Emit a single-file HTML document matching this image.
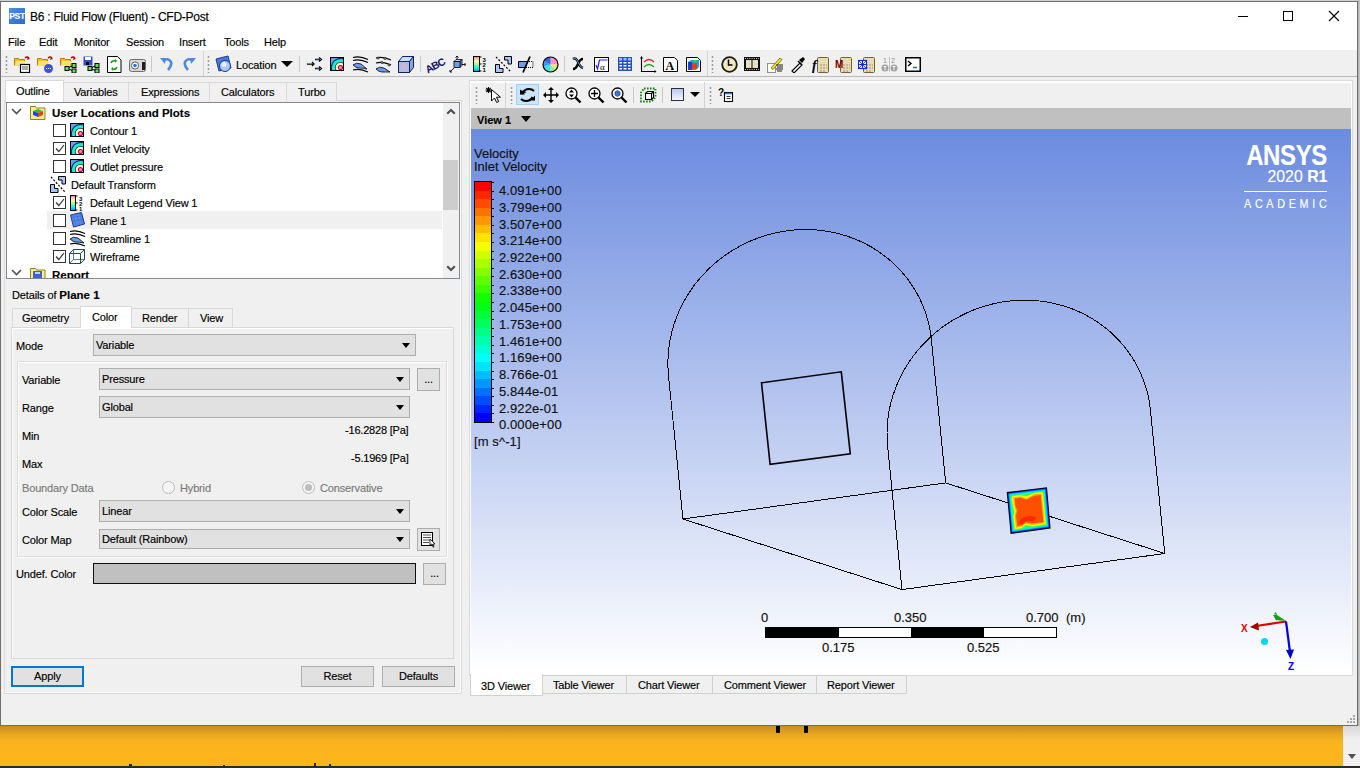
<!DOCTYPE html>
<html><head><meta charset="utf-8">
<style>
*{box-sizing:border-box;margin:0;padding:0}
html,body{width:1360px;height:768px;overflow:hidden;background:#f0f0f0}
body{position:relative;font-family:"Liberation Sans",sans-serif;font-size:11px;color:#000;letter-spacing:-0.15px;-webkit-text-stroke:0.15px currentColor}
.a{position:absolute}
.t{position:absolute;white-space:nowrap;line-height:13px}
.sep{position:absolute;width:1px;background:#c8c8c8}
.grip{position:absolute;width:3px;background-image:radial-gradient(circle at 1.5px 2px,#9c9c9c 0.8px,#d8d8d8 1.1px,transparent 1.4px);background-size:3px 4px}
.combo{position:absolute;background:#e1e1e1;border:1px solid #adadad}
.combo span{position:absolute;left:2px;top:4px;white-space:nowrap;line-height:13px}
.combo i{position:absolute;right:5px;top:8px;width:0;height:0;border-left:4px solid transparent;border-right:4px solid transparent;border-top:5px solid #000}
.btn{position:absolute;background:#e1e1e1;border:1px solid #adadad;text-align:center;line-height:19px}
.cb{position:absolute;width:13px;height:13px;border:1px solid #333;background:#fff}
.tab{position:absolute;background:#f0f0f0;border:1px solid #d9d9d9;border-bottom:none}
.tab span{position:absolute;white-space:nowrap;line-height:13px}
</style></head><body>

<!-- orange background page below window -->
<div class="a" style="left:0;top:726px;width:1343px;height:40px;background:linear-gradient(#c88c1e 0px,#e6a61f 8px,#fbb41d 16px,#fdb61d 40px)"></div>
<div class="a" style="left:1343px;top:726px;width:17px;height:40px;background:linear-gradient(#d8d8d8,#f0f0f0 14px)"></div>
<div class="a" style="left:1348px;top:754px;width:0;height:0;border-left:4px solid transparent;border-right:4px solid transparent;border-top:5px solid #505050"></div>
<div class="a" style="left:0;top:766px;width:1360px;height:2px;background:#2b2b2b"></div>
<div class="a" style="left:776px;top:726px;width:4px;height:7px;background:#000;border-radius:0 0 1px 1px"></div>
<div class="a" style="left:804px;top:726px;width:4px;height:7px;background:#000;border-radius:0 0 1px 1px"></div>
<div class="a" style="left:129px;top:764px;width:3px;height:2px;background:#222"></div>
<div class="a" style="left:223px;top:765px;width:2px;height:1px;background:#222"></div>
<div class="a" style="left:314px;top:763px;width:2px;height:3px;background:#222"></div>
<div class="a" style="left:329px;top:764px;width:2px;height:2px;background:#222"></div>

<!-- window -->
<div class="a" style="left:0;top:0;width:1360px;height:1px;background:#cdd1d5"></div><div class="a" style="left:1358px;top:0;width:2px;height:726px;background:linear-gradient(90deg,#a8a8a8,#cfcfcf)"></div>
<div id="win" class="a" style="left:0;top:1px;width:1358px;height:725px;background:#f0f0f0;border:1px solid #6e6e6e">
</div>

<!-- title bar -->
<div class="a" style="left:1px;top:2px;width:1356px;height:49px;background:#fff"></div>
<div class="a" style="left:9px;top:8px;width:16px;height:16px;background:linear-gradient(135deg,#4a8ee8,#2a6ad8)"></div>
<div class="t" style="left:9px;top:8px;width:16px;text-align:center;line-height:16px;font-size:8.5px;font-weight:700;color:#fff;letter-spacing:-0.3px">PST</div>
<div class="t" style="left:30px;top:11px;font-size:12px;letter-spacing:-0.25px">B6 : Fluid Flow (Fluent) - CFD-Post</div>
<!-- window controls -->
<div class="a" style="left:1238px;top:16px;width:10px;height:1px;background:#000"></div>
<div class="a" style="left:1283px;top:11px;width:10px;height:10px;border:1px solid #000"></div>
<svg class="a" style="left:1328px;top:10px" width="12" height="12"><path d="M1 1L11 11M11 1L1 11" stroke="#000" stroke-width="1.1"/></svg>

<!-- menu -->
<div class="t" style="left:8px;top:36px">File</div>
<div class="t" style="left:39px;top:36px">Edit</div>
<div class="t" style="left:74px;top:36px">Monitor</div>
<div class="t" style="left:126px;top:36px">Session</div>
<div class="t" style="left:179px;top:36px">Insert</div>
<div class="t" style="left:224px;top:36px">Tools</div>
<div class="t" style="left:264px;top:36px">Help</div>
<div class="a" style="left:1px;top:50px;width:1356px;height:1px;background:#f0f0f0"></div>

<!-- main toolbar -->
<div class="a" style="left:1px;top:51px;width:1356px;height:26px;background:#f0f0f0;border-bottom:1px solid #b8b8b8"></div>
<!-- toolbar grips / separators -->
<div class="grip" style="left:5px;top:55px;height:18px"></div>
<div class="sep" style="left:151px;top:56px;height:16px"></div>
<div class="a" style="left:203px;top:51px;width:1px;height:25px;background:#d4d4d4"></div>
<div class="grip" style="left:207px;top:55px;height:18px"></div>
<div class="sep" style="left:299px;top:56px;height:16px"></div>
<div class="sep" style="left:420px;top:56px;height:16px"></div>
<div class="sep" style="left:564px;top:56px;height:16px"></div>
<div class="a" style="left:707px;top:51px;width:1px;height:25px;background:#d4d4d4"></div>
<div class="grip" style="left:711px;top:55px;height:18px"></div>

<!-- icons row 1 -->
<svg class="a" style="left:14px;top:56px" width="17" height="17" viewBox="0 0 17 17">
 <path d="M0.5 2.5h4l1 1h5v6h-10z" fill="#f0c030" stroke="#b08000" stroke-width="1"/>
 <path d="M2 5h10l-2 5H0.5z" fill="#ffe070"/>
 <path d="M11 2q2-2 4 0" stroke="#c00000" fill="none" stroke-width="1.3"/><path d="M14 1l2 2-3 1z" fill="#c00000"/>
 <rect x="6.5" y="8.5" width="9" height="8" fill="#fff" stroke="#000" stroke-width="1.2"/>
 <path d="M8 11h6M8 13h6" stroke="#555" stroke-width="1"/>
</svg>
<svg class="a" style="left:37px;top:56px" width="17" height="17" viewBox="0 0 17 17">
 <path d="M0.5 2.5h4l1 1h5v6h-10z" fill="#f0c030" stroke="#b08000" stroke-width="1"/>
 <path d="M2 5h10l-2 5H0.5z" fill="#ffe070"/>
 <path d="M11 2q2-2 4 0" stroke="#c00000" fill="none" stroke-width="1.3"/><path d="M14 1l2 2-3 1z" fill="#c00000"/>
 <circle cx="11.5" cy="12.5" r="4.5" fill="#3b4ef0"/>
 <path d="M9 12.5h1M11 12.5h1M13 12.5h1" stroke="#fff" stroke-width="1.2"/>
</svg>
<svg class="a" style="left:60px;top:56px" width="17" height="17" viewBox="0 0 17 17">
 <path d="M0.5 2.5h4l1 1h5v6h-10z" fill="#f0c030" stroke="#b08000" stroke-width="1"/>
 <path d="M2 5h10l-2 5H0.5z" fill="#ffe070"/>
 <path d="M11 2q2-2 4 0" stroke="#c00000" fill="none" stroke-width="1.3"/><path d="M14 1l2 2-3 1z" fill="#c00000"/>
 <path d="M7 12.5L14 9M7 12.5L14 15" stroke="#000" stroke-width="1"/>
 <rect x="5" y="10.5" width="4" height="4" fill="#60e060" stroke="#000"/><rect x="12" y="7.5" width="4" height="4" fill="#60e060" stroke="#000"/><rect x="12" y="13" width="4" height="4" fill="#60e060" stroke="#000"/>
</svg>
<svg class="a" style="left:83px;top:56px" width="17" height="17" viewBox="0 0 17 17">
 <rect x="0.5" y="0.5" width="9" height="9" fill="#3050c0"/><rect x="2" y="1" width="6" height="3" fill="#fff"/><rect x="3" y="6" width="3" height="3" fill="#000"/>
 <path d="M7 12.5L14 9M7 12.5L14 15" stroke="#000" stroke-width="1"/>
 <rect x="5" y="10.5" width="4" height="4" fill="#60e060" stroke="#000"/><rect x="12" y="7.5" width="4" height="4" fill="#60e060" stroke="#000"/><rect x="12" y="13" width="4" height="4" fill="#60e060" stroke="#000"/>
</svg>
<svg class="a" style="left:107px;top:56px" width="15" height="17" viewBox="0 0 15 17">
 <path d="M0.5 0.5h10l3.5 3.5v12.5h-13.5z" fill="#fff" stroke="#000"/>
 <path d="M4 7q1-3 5-2" stroke="#1a9a1a" stroke-width="1.6" fill="none"/><path d="M10 11q-1 3-5 2" stroke="#1a9a1a" stroke-width="1.6" fill="none"/>
 <path d="M8 3l2 2-2 2z" fill="#1a9a1a"/><path d="M6 11l-2 2 2 2z" fill="#1a9a1a"/>
</svg>
<svg class="a" style="left:129px;top:58px" width="17" height="14" viewBox="0 0 17 14">
 <rect x="0.5" y="1.5" width="16" height="12" rx="2" fill="#d8d8d8" stroke="#707070"/>
 <circle cx="6" cy="7.5" r="3.6" fill="#fff" stroke="#606060"/><circle cx="6" cy="7.5" r="1.8" fill="#3070d0"/>
 <rect x="13" y="4" width="3" height="8" fill="#202020"/>
</svg>
<svg class="a" style="left:160px;top:56px" width="13" height="16" viewBox="0 0 13 16">
 <path d="M3 5q5-4 8 1q1 4-3 8" stroke="#4a8ae0" stroke-width="2.6" fill="none"/><path d="M0 2l6 0-1 6z" fill="#4a8ae0"/>
</svg>
<svg class="a" style="left:183px;top:56px" width="13" height="16" viewBox="0 0 13 16">
 <path d="M10 5q-5-4-8 1q-1 4 3 8" stroke="#4a8ae0" stroke-width="2.6" fill="none"/><path d="M13 2l-6 0 1 6z" fill="#4a8ae0"/>
</svg>
<!-- location -->
<svg class="a" style="left:215px;top:55px" width="18" height="18" viewBox="0 0 18 18">
 <path d="M1 4l12-3 3 12-12 3z" fill="#4a78d8" stroke="#1a3a90"/>
 <circle cx="10" cy="11" r="5.5" fill="#a8c8ff" stroke="#1a3a90"/><circle cx="9" cy="9.5" r="2.5" fill="#e8f0ff"/>
</svg>
<div class="t" style="left:236px;top:59px">Location</div>
<div class="a" style="left:281px;top:61px;width:0;height:0;border-left:6px solid transparent;border-right:6px solid transparent;border-top:6px solid #000"></div>
<svg class="a" style="left:306px;top:56px" width="17" height="17" viewBox="0 0 17 17">
 <path d="M1 8h6M6 6l2 2-2 2M9 3.5h5M13 1.5l2.5 2-2.5 2M9 12.5h5M13 10.5l2.5 2-2.5 2" stroke="#000" stroke-width="1.3" fill="none"/>
 <path d="M1.5 7.5h5M9.5 3h4M9.5 12h4" stroke="#6aa0f0" stroke-width="0.8"/>
</svg>
<svg class="a" style="left:330px;top:57px" width="14" height="14" viewBox="0 0 14 14">
 <defs><clipPath id="citb"><rect x="1" y="1" width="12" height="12"/></clipPath></defs>
 <rect x="0" y="0" width="14" height="14" fill="#000"/><rect x="1" y="1" width="12" height="12" fill="#6a9ef0"/>
 <g clip-path="url(#citb)"><circle cx="10.5" cy="10.5" r="9.6" fill="#102860"/><circle cx="10.5" cy="10.5" r="8.6" fill="#20e8d0"/><circle cx="10.5" cy="10.5" r="5.6" fill="#203040"/><circle cx="10.5" cy="10.5" r="4.8" fill="#fff8c0"/><circle cx="10.5" cy="10.5" r="2.6" fill="#b00040"/><circle cx="10.5" cy="10.5" r="1.5" fill="#ff90d8"/></g>
</svg>
<svg class="a" style="left:352px;top:56px" width="17" height="17" viewBox="0 0 17 17">
 <path d="M1 1.5q7-2 15 2M1 4.5q7-2 15 2M1 14q7-2 15 2" stroke="#000" stroke-width="1.2" fill="none"/>
 <path d="M1 9q3-3 8-1l6 5q-5-1-8-1t-6-3z" fill="#6a9ef0" stroke="#000" stroke-width="0.8"/>
</svg>
<svg class="a" style="left:375px;top:56px" width="17" height="17" viewBox="0 0 17 17">
 <path d="M1 2q7-2 15 2M1 7q7-2 15 2" stroke="#000" stroke-width="1.1" fill="none"/>
 <circle cx="3" cy="2" r="1" fill="#fff" stroke="#000" stroke-width="0.8"/><circle cx="10" cy="2.5" r="1" fill="#fff" stroke="#000" stroke-width="0.8"/><circle cx="7" cy="6.5" r="1" fill="#fff" stroke="#000" stroke-width="0.8"/><circle cx="14" cy="9" r="1" fill="#fff" stroke="#000" stroke-width="0.8"/>
 <path d="M1 13q3-3 8-1l6 4q-5-0-8-0t-6-3z" fill="#6a9ef0" stroke="#000" stroke-width="0.8"/>
</svg>
<svg class="a" style="left:398px;top:56px" width="17" height="17" viewBox="0 0 17 17">
 <path d="M0.5 5.5l4-5h11l-4 5z" fill="#c8e0f8" stroke="#102060"/>
 <path d="M11.5 5.5l4-5v11l-4 5z" fill="#88a8d8" stroke="#102060"/>
 <rect x="0.5" y="5.5" width="11" height="11" fill="#a8c0e0" stroke="#102060"/>
 <circle cx="6" cy="11" r="3" fill="#e0b0d0" opacity="0.7"/>
</svg>
<svg class="a" style="left:426px;top:56px;overflow:visible" width="17" height="16" viewBox="0 0 17 16">
 <text x="-2" y="13.5" transform="rotate(-28 8 8)" font-family="Liberation Sans" font-weight="700" font-size="10.5" fill="#10106a" letter-spacing="-0.8">ABC</text>
</svg>
<svg class="a" style="left:449px;top:56px" width="17" height="17" viewBox="0 0 17 17">
 <path d="M5 5.5l2-2h6l-2 2z" fill="#c0d8ff" stroke="#000" stroke-width="0.8"/><path d="M11 5.5l2-2v6l-2 2z" fill="#80a0e0" stroke="#000" stroke-width="0.8"/><rect x="5" y="5.5" width="6" height="6" fill="#6a9ef0" stroke="#000" stroke-width="0.8"/>
 <path d="M8 3V0.5M6.5 1.5l1.5-1.5 1.5 1.5M13 8.5h3.5M15.5 7l1.5 1.5-1.5 1.5M5 12l-4 4M1 14v2h2" stroke="#000" stroke-width="0.9" fill="none"/>
</svg>
<svg class="a" style="left:473px;top:56px" width="16" height="17" viewBox="0 0 16 17">
 <defs><linearGradient id="rb" x1="0" y1="0" x2="0" y2="1"><stop offset="0" stop-color="#ff70c8"/><stop offset="0.3" stop-color="#ffffa0"/><stop offset="0.55" stop-color="#90ff90"/><stop offset="0.8" stop-color="#00f0f0"/><stop offset="1" stop-color="#2080ff"/></linearGradient></defs>
 <rect x="0.5" y="0.5" width="6" height="15" fill="url(#rb)" stroke="#000"/>
 <path d="M6.5 1h2M6.5 8h2M6.5 15h2" stroke="#000"/>
 <text x="9.5" y="6" font-family="Liberation Sans" font-weight="700" font-size="6" fill="#000">3</text><text x="9.5" y="11" font-family="Liberation Sans" font-weight="700" font-size="6" fill="#000">2</text><text x="9.5" y="16" font-family="Liberation Sans" font-weight="700" font-size="6" fill="#000">1</text>
</svg>
<svg class="a" style="left:495px;top:56px" width="17" height="17" viewBox="0 0 17 17">
 <path d="M1 1l15 15" stroke="#000" stroke-width="1.2" stroke-dasharray="2 1.6"/>
 <path d="M9.5 0.5h7v7.5h-3.5v-4h-3.5z" fill="#a8c4f8" stroke="#000"/>
 <path d="M0.5 8.5h4v4h3.5v4h-7.5z" fill="#a8c4f8" stroke="#000"/>
</svg>
<svg class="a" style="left:518px;top:56px" width="17" height="17" viewBox="0 0 17 17">
 <path d="M0.5 5.5h9l-2 6h-7z" fill="#6a9ef0" stroke="#000"/>
 <path d="M9 5.5h6v6h-8" stroke="#000" stroke-dasharray="1 1" fill="none"/>
 <path d="M12 0.5l-7 16" stroke="#000" stroke-width="1.7"/>
</svg>
<svg class="a" style="left:542px;top:56px" width="17" height="17" viewBox="0 0 17 17">
 <defs><clipPath id="cw"><circle cx="8.5" cy="8.5" r="7.5"/></clipPath></defs>
 <g clip-path="url(#cw)"><path d="M8.5 8.5L8.5 0L17 0L17 8z" fill="#ff90d0"/><path d="M8.5 8.5L17 8L17 17z" fill="#ffe080"/><path d="M8.5 8.5L17 17L8 17z" fill="#90f090"/><path d="M8.5 8.5L8 17L0 17L0 11z" fill="#40e0e0"/><path d="M8.5 8.5L0 11L0 4z" fill="#30a0f0"/><path d="M8.5 8.5L0 4L0 0L8.5 0z" fill="#4060e0"/></g>
 <circle cx="8.5" cy="8.5" r="7.5" fill="none" stroke="#000" stroke-width="1.2"/>
</svg>
<svg class="a" style="left:572px;top:57px" width="13" height="14" viewBox="0 0 13 14">
 <path d="M1 2q3-2 5 3t5 6M11 2q-3 0-5 5t-5 5" stroke="#000" stroke-width="2.4" fill="none"/>
 <path d="M1 2q3-2 5 3t5 6" stroke="#6a9ef0" stroke-width="1" fill="none"/>
</svg>
<svg class="a" style="left:594px;top:57px" width="15" height="15" viewBox="0 0 15 15">
 <rect x="0.5" y="0.5" width="14" height="14" fill="#fff" stroke="#000"/>
 <path d="M2 8l1.5 4 2-9h8" stroke="#2020f0" stroke-width="1.2" fill="none"/>
 <text x="6" y="13" font-family="Liberation Serif" font-size="9" fill="#000">α</text>
</svg>
<svg class="a" style="left:618px;top:57px" width="14" height="14" viewBox="0 0 14 14">
 <rect x="0.75" y="0.75" width="12.5" height="12.5" fill="#fff" stroke="#2850c0" stroke-width="1.5"/>
 <rect x="1" y="1" width="12" height="3" fill="#98c0f8"/>
 <path d="M1 4.25h12M1 7.25h12M1 10.25h12M4.75 1v12M9.25 1v12" stroke="#2850c0" stroke-width="1.5"/>
</svg>
<svg class="a" style="left:640px;top:56px" width="17" height="17" viewBox="0 0 17 17">
 <path d="M1.5 1v14.5H16" stroke="#000" stroke-width="1.1" fill="none"/><path d="M0 2.5l1.5-2.5 1.5 2.5M14.5 14l2 1.5-2 1.5" fill="#000"/>
 <path d="M4 6q5-5 10 0" stroke="#e02020" stroke-width="1.3" fill="none"/><path d="M4 11q5-5 10 0" stroke="#20a020" stroke-width="1.3" fill="none"/>
</svg>
<svg class="a" style="left:663px;top:57px" width="15" height="15" viewBox="0 0 15 15">
 <path d="M0.5 0.5h11l3 3v11h-14z" fill="#fff" stroke="#000"/>
 <text x="2.5" y="12.5" font-family="Liberation Serif" font-weight="700" font-size="12" fill="#000">A</text>
</svg>
<svg class="a" style="left:686px;top:57px" width="15" height="15" viewBox="0 0 15 15">
 <path d="M0.5 0.5h11l3 3v11h-14z" fill="#fff" stroke="#000"/>
 <path d="M2 5l3-2h8v7l-3 3H2z" fill="#20a0e0"/><path d="M5 6h6v6H5z" fill="#e04020"/><path d="M2 5h4v8H2z" fill="#2040d0"/><path d="M7 3h4l-2 3z" fill="#40d040"/>
</svg>
<!-- row 1 right part -->
<svg class="a" style="left:721px;top:56px" width="17" height="17" viewBox="0 0 17 17">
 <circle cx="8.5" cy="8.5" r="7.3" fill="#f0e8c0" stroke="#201a10" stroke-width="1.8"/><path d="M7.5 3.5v5.5h4" stroke="#000" stroke-width="1.5" fill="none"/>
</svg>
<svg class="a" style="left:744px;top:57px" width="16" height="14" viewBox="0 0 16 14">
 <rect x="0" y="0" width="16" height="14" fill="#101010"/><rect x="2" y="3" width="5.5" height="8" fill="#e8e0c0"/><rect x="8.5" y="3" width="5.5" height="8" fill="#e8e0c0"/>
 <path d="M1 1.5h14M1 12.5h14" stroke="#fff" stroke-width="0.8" stroke-dasharray="1 1.2"/>
</svg>
<svg class="a" style="left:767px;top:56px" width="17" height="17" viewBox="0 0 17 17">
 <rect x="0.5" y="7.5" width="8" height="9" fill="#fff" stroke="#909090"/>
 <path d="M4 12l9-10 2 1.5-9 10z" fill="#f8e020" stroke="#605000" stroke-width="0.7"/>
 <path d="M9 9h7M10 11h6M9 13h7M10 15h5" stroke="#000" stroke-width="0.9"/>
</svg>
<svg class="a" style="left:790px;top:56px" width="15" height="17" viewBox="0 0 15 17">
 <path d="M2 15l8-8 2 2-8 8z" fill="#fff" stroke="#000" stroke-width="1.1"/>
 <path d="M9 4l4-3 2 2-3 4z" fill="#000"/><path d="M8 5l4 4" stroke="#000" stroke-width="1.5"/>
</svg>
<svg class="a" style="left:812px;top:56px" width="18" height="17" viewBox="0 0 18 17">
 <rect x="5.5" y="1.5" width="11" height="15" rx="1" fill="#e8dcb0" stroke="#706040"/>
 <path d="M8 9h2M11 9h2M14 9h1M8 12h2M11 12h2M14 12h1M8 15h2M11 15h2" stroke="#a09070"/>
 <text x="0" y="14" font-family="Liberation Serif" font-style="italic" font-weight="700" font-size="14" fill="#000">f</text>
</svg>
<svg class="a" style="left:835px;top:56px" width="18" height="17" viewBox="0 0 18 17">
 <rect x="5.5" y="1.5" width="11" height="15" rx="1" fill="#e8dcb0" stroke="#706040"/>
 <path d="M8 9h2M11 9h2M14 9h1M8 12h2M11 12h2M14 12h1M8 15h2M11 15h2" stroke="#a09070"/>
 <text x="0" y="12" font-family="Liberation Sans" font-weight="700" font-size="10" fill="#800000">M</text>
</svg>
<svg class="a" style="left:858px;top:56px" width="18" height="17" viewBox="0 0 18 17">
 <rect x="5.5" y="1.5" width="11" height="15" rx="1" fill="#e8dcb0" stroke="#706040"/>
 <path d="M8 9h2M11 9h2M14 9h1M8 12h2M11 12h2M14 12h1M8 15h2M11 15h2" stroke="#a09070"/>
 <rect x="0.5" y="4.5" width="8" height="8" fill="#fff" stroke="#1030d0" stroke-width="1.2"/><path d="M0.5 8.5h8M4.5 4.5v8" stroke="#1030d0" stroke-width="1.2"/><path d="M1 5l7 7M8 5l-7 7" stroke="#1030d0" stroke-width="0.8"/>
</svg>
<svg class="a" style="left:881px;top:56px" width="17" height="17" viewBox="0 0 17 17">
 <text x="2" y="7" font-family="Liberation Sans" font-size="7" fill="#909090">1</text><text x="10" y="7" font-family="Liberation Sans" font-size="7" fill="#909090">2</text>
 <path d="M8.5 1v15" stroke="#b0b0b0" stroke-width="0.7"/>
 <circle cx="4" cy="12" r="3.5" fill="#a0a0a0"/><circle cx="13" cy="12" r="3.5" fill="#a0a0a0"/><path d="M2.5 10.5h3M4 10.5v4M11.5 10.5h3M13 10.5v4" stroke="#fff" stroke-width="0.9"/>
</svg>
<svg class="a" style="left:905px;top:57px" width="16" height="15" viewBox="0 0 16 15">
 <rect x="0.75" y="0.75" width="14.5" height="13.5" fill="#fff" stroke="#000" stroke-width="1.5"/>
 <path d="M3 4l3 2.5-3 2.5" stroke="#000" stroke-width="1.4" fill="none"/><path d="M8 10.5h4" stroke="#2060e0" stroke-width="1.5"/>
</svg>


<!-- LEFT PANEL -->
<!-- left panel outer frame -->
<div class="a" style="left:4px;top:100px;width:458px;height:594px;border:1px solid #dadada;box-shadow:inset -1px -1px 0 #fff"></div>
<!-- outline tabs -->
<div class="tab" style="left:63px;top:82px;width:66px;height:19px"><span style="left:10px;top:3px">Variables</span></div>
<div class="tab" style="left:128px;top:82px;width:82px;height:19px"><span style="left:12px;top:3px">Expressions</span></div>
<div class="tab" style="left:209px;top:82px;width:78px;height:19px"><span style="left:11px;top:3px">Calculators</span></div>
<div class="tab" style="left:286px;top:82px;width:51px;height:19px"><span style="left:11px;top:3px">Turbo</span></div>

<div class="tab" style="left:5px;top:80px;width:59px;height:23px;background:#fff;border-color:#d9d9d9"><span style="left:10px;top:4px">Outline</span></div>
<!-- tree box -->
<div class="a" style="left:6px;top:102px;width:454px;height:177px;background:#fff;border:1px solid #828790"></div>
<!-- scrollbar -->
<div class="a" style="left:443px;top:103px;width:16px;height:175px;background:#f0f0f0"></div>
<div class="a" style="left:443px;top:160px;width:15px;height:50px;background:#cdcdcd"></div>
<svg class="a" style="left:446px;top:108px" width="10" height="7"><path d="M1.2 5.8l3.8-3.8 3.8 3.8" stroke="#505050" stroke-width="2.2" fill="none"/></svg>
<svg class="a" style="left:446px;top:265px" width="10" height="7"><path d="M1.2 1.2l3.8 3.8 3.8-3.8" stroke="#505050" stroke-width="2.2" fill="none"/></svg>
<!-- highlighted row -->
<div class="a" style="left:47px;top:211px;width:395px;height:18px;background:#f0f0f0"></div>
<!-- tree items -->
<svg class="a" style="left:11px;top:108px" width="11" height="7"><path d="M1 1l4.5 4.5 4.5-4.5" stroke="#505050" stroke-width="1.6" fill="none"/></svg>
<svg class="a" style="left:30px;top:104px" width="16" height="16" viewBox="0 0 16 16">
 <path d="M0.5 2.5h5l1 1.5h8.5v11.5h-14.5z" fill="#f8f090" stroke="#908020"/>
 <path d="M3 7l5-2 5 2-5 2z" fill="#30c030"/><path d="M3 7v4l5 2v-4z" fill="#2040e0"/><path d="M8 9v4l5-2v-4z" fill="#e04020"/>
</svg>
<div class="t" style="left:52px;top:107px;font-weight:700;font-size:11.5px;letter-spacing:0">User Locations and Plots</div>

<div class="cb" style="left:53px;top:124px"></div>
<div class="cb" style="left:53px;top:142px"></div>
<div class="cb" style="left:53px;top:160px"></div>
<div class="cb" style="left:53px;top:196px"></div>
<div class="cb" style="left:53px;top:214px"></div>
<div class="cb" style="left:53px;top:232px"></div>
<div class="cb" style="left:53px;top:250px"></div>
<svg class="a" style="left:55px;top:144px" width="10" height="9"><path d="M1 4.5l2.8 3L9 1" stroke="#333" stroke-width="1.2" fill="none"/></svg>
<svg class="a" style="left:55px;top:198px" width="10" height="9"><path d="M1 4.5l2.8 3L9 1" stroke="#333" stroke-width="1.2" fill="none"/></svg>
<svg class="a" style="left:55px;top:252px" width="10" height="9"><path d="M1 4.5l2.8 3L9 1" stroke="#333" stroke-width="1.2" fill="none"/></svg>

<!-- contour icons -->
<svg class="a" style="left:70px;top:123px" width="14" height="14" viewBox="0 0 14 14">
 <defs><clipPath id="ci123"><rect x="1" y="1" width="12" height="12"/></clipPath></defs>
 <rect x="0" y="0" width="14" height="14" fill="#000"/><rect x="1" y="1" width="12" height="12" fill="#6a9ef0"/>
 <g clip-path="url(#ci123)"><circle cx="10.5" cy="10.5" r="9.6" fill="#102860"/><circle cx="10.5" cy="10.5" r="8.6" fill="#20e8d0"/><circle cx="10.5" cy="10.5" r="5.6" fill="#203040"/><circle cx="10.5" cy="10.5" r="4.8" fill="#fff8c0"/><circle cx="10.5" cy="10.5" r="2.6" fill="#b00040"/><circle cx="10.5" cy="10.5" r="1.5" fill="#ff90d8"/></g>
</svg>
<svg class="a" style="left:70px;top:141px" width="14" height="14" viewBox="0 0 14 14">
 <defs><clipPath id="ci141"><rect x="1" y="1" width="12" height="12"/></clipPath></defs>
 <rect x="0" y="0" width="14" height="14" fill="#000"/><rect x="1" y="1" width="12" height="12" fill="#6a9ef0"/>
 <g clip-path="url(#ci141)"><circle cx="10.5" cy="10.5" r="9.6" fill="#102860"/><circle cx="10.5" cy="10.5" r="8.6" fill="#20e8d0"/><circle cx="10.5" cy="10.5" r="5.6" fill="#203040"/><circle cx="10.5" cy="10.5" r="4.8" fill="#fff8c0"/><circle cx="10.5" cy="10.5" r="2.6" fill="#b00040"/><circle cx="10.5" cy="10.5" r="1.5" fill="#ff90d8"/></g>
</svg>
<svg class="a" style="left:70px;top:159px" width="14" height="14" viewBox="0 0 14 14">
 <defs><clipPath id="ci159"><rect x="1" y="1" width="12" height="12"/></clipPath></defs>
 <rect x="0" y="0" width="14" height="14" fill="#000"/><rect x="1" y="1" width="12" height="12" fill="#6a9ef0"/>
 <g clip-path="url(#ci159)"><circle cx="10.5" cy="10.5" r="9.6" fill="#102860"/><circle cx="10.5" cy="10.5" r="8.6" fill="#20e8d0"/><circle cx="10.5" cy="10.5" r="5.6" fill="#203040"/><circle cx="10.5" cy="10.5" r="4.8" fill="#fff8c0"/><circle cx="10.5" cy="10.5" r="2.6" fill="#b00040"/><circle cx="10.5" cy="10.5" r="1.5" fill="#ff90d8"/></g>
</svg>
<!-- transform -->
<svg class="a" style="left:50px;top:176px" width="16" height="17" viewBox="0 0 16 17">
 <path d="M1 1l14 15" stroke="#000" stroke-width="1.2" stroke-dasharray="2 1.6"/>
 <path d="M8.5 0.5h7v7.5h-3.5v-4h-3.5z" fill="#a8c4f8" stroke="#000"/>
 <path d="M0.5 8.5h4v4h3.5v4h-7.5z" fill="#a8c4f8" stroke="#000"/>
</svg>
<!-- legend -->
<svg class="a" style="left:70px;top:195px" width="16" height="16" viewBox="0 0 16 16">
 <rect x="0.5" y="0.5" width="5" height="15" fill="url(#rb)" stroke="#000"/>
 <path d="M5.5 1h2M5.5 8h2M5.5 15h2" stroke="#000"/>
 <text x="9" y="5.5" font-family="Liberation Sans" font-weight="700" font-size="6" fill="#000">3</text><text x="9" y="10.5" font-family="Liberation Sans" font-weight="700" font-size="6" fill="#000">2</text><text x="9" y="15.5" font-family="Liberation Sans" font-weight="700" font-size="6" fill="#000">1</text>
</svg>
<!-- plane -->
<svg class="a" style="left:69px;top:212px" width="16" height="16" viewBox="0 0 16 16">
 <path d="M1.5 3l11-2.5 3 11.5-11 3z" fill="#5a8ae8" stroke="#1a3a90"/>
 <path d="M4 2.4l3 11.5M7.5 1.6l3 11.5M11 0.9l3 11.5M2.2 6l11-2.5M3 9.5l11.3-2.6" stroke="#3a6ad0" stroke-width="0.6"/>
</svg>
<!-- streamline -->
<svg class="a" style="left:69px;top:230px" width="17" height="17" viewBox="0 0 17 17">
 <path d="M1 1.5q7-2 15 2M1 4.5q7-2 15 2M1 14q7-2 15 2" stroke="#000" stroke-width="1.1" fill="none"/>
 <path d="M1 9q3-3 8-1l6 5q-5-1-8-1t-6-3z" fill="#6a9ef0" stroke="#000" stroke-width="0.8"/>
</svg>
<!-- wireframe -->
<svg class="a" style="left:69px;top:249px" width="16" height="15" viewBox="0 0 16 15">
 <path d="M0.5 4.5h11v10h-11zM0.5 4.5l4-4h11l-4 4M11.5 14.5l4-4v-10" stroke="#204850" fill="none"/><path d="M4.5 0.5v10h11M4.5 10.5l-4 4" stroke="#204850" stroke-width="0.7" fill="none"/>
</svg>

<div class="t" style="left:90px;top:125px">Contour 1</div>
<div class="t" style="left:90px;top:143px">Inlet Velocity</div>
<div class="t" style="left:90px;top:161px">Outlet pressure</div>
<div class="t" style="left:71px;top:179px">Default Transform</div>
<div class="t" style="left:90px;top:197px">Default Legend View 1</div>
<div class="t" style="left:90px;top:215px">Plane 1</div>
<div class="t" style="left:90px;top:233px">Streamline 1</div>
<div class="t" style="left:90px;top:251px">Wireframe</div>

<!-- report row (clipped) -->
<div class="a" style="left:7px;top:264px;width:436px;height:14px;overflow:hidden">
 <svg class="a" style="left:4px;top:5px" width="11" height="7"><path d="M1 1l4.5 4.5 4.5-4.5" stroke="#505050" stroke-width="1.6" fill="none"/></svg>
 <svg class="a" style="left:23px;top:2px" width="16" height="16" viewBox="0 0 16 16">
  <path d="M0.5 2.5h5l1 1.5h8.5v11.5h-14.5z" fill="#f8f090" stroke="#908020"/>
  <rect x="3" y="5" width="9" height="10" fill="#4060d0"/><rect x="5" y="6" width="5" height="2" fill="#c0d0ff"/>
 </svg>
 <div class="t" style="left:45px;top:5px;font-weight:700;font-size:11.5px;letter-spacing:0">Report</div>
</div>

<!-- details -->
<div class="t" style="left:12px;top:289px">Details of <b style="font-size:11.5px;letter-spacing:0">Plane 1</b></div>
<!-- detail tabs -->
<div class="tab" style="left:12px;top:308px;width:69px;height:19px"><span style="left:9px;top:3px">Geometry</span></div>
<div class="tab" style="left:131px;top:308px;width:58px;height:19px"><span style="left:10px;top:3px">Render</span></div>
<div class="tab" style="left:188px;top:308px;width:45px;height:19px"><span style="left:11px;top:3px">View</span></div>
<!-- panel box -->
<div class="a" style="left:11px;top:327px;width:443px;height:332px;background:#f0f0f0;border:1px solid #d9d9d9;box-shadow:inset 1px 1px 0 #fff"></div>
<div class="tab" style="left:80px;top:306px;width:52px;height:22px;background:#f0f0f0;border-color:#d9d9d9;border-top-color:#d9d9d9"><span style="left:11px;top:4px">Color</span></div>
<div class="a" style="left:81px;top:307px;width:50px;height:21px;background:#fff"></div>
<div class="t" style="left:92px;top:311px">Color</div>

<div class="t" style="left:16px;top:340px">Mode</div>
<div class="combo" style="left:93px;top:334px;width:323px;height:22px"><span>Variable</span><i></i></div>
<!-- inner group -->
<div class="a" style="left:17px;top:361px;width:430px;height:196px;border:1px solid #dcdcdc;box-shadow:inset 1px 1px 0 #fff, 1px 1px 0 #fff"></div>
<div class="t" style="left:22px;top:374px">Variable</div>
<div class="combo" style="left:99px;top:368px;width:311px;height:22px"><span>Pressure</span><i></i></div>
<div class="btn" style="left:417px;top:368px;width:23px;height:23px;line-height:20px">...</div>
<div class="t" style="left:22px;top:402px">Range</div>
<div class="combo" style="left:99px;top:396px;width:311px;height:22px"><span>Global</span><i></i></div>
<div class="t" style="left:22px;top:430px">Min</div>
<div class="t" style="left:345px;top:424px;letter-spacing:-0.2px">-16.2828 [Pa]</div>
<div class="t" style="left:22px;top:458px">Max</div>
<div class="t" style="left:351px;top:452px;letter-spacing:-0.2px">-5.1969 [Pa]</div>
<div class="t" style="left:22px;top:482px;color:#7a7a7a">Boundary Data</div>
<div class="a" style="left:162px;top:481px;width:13px;height:13px;border-radius:50%;border:1px solid #bcbcbc;background:#f5f5f5"></div>
<div class="t" style="left:180px;top:482px;color:#7a7a7a">Hybrid</div>
<div class="a" style="left:302px;top:481px;width:13px;height:13px;border-radius:50%;border:1px solid #bcbcbc;background:#f5f5f5"></div>
<div class="a" style="left:305px;top:484px;width:7px;height:7px;border-radius:50%;background:#bcbcbc"></div>
<div class="t" style="left:320px;top:482px;color:#7a7a7a">Conservative</div>
<div class="t" style="left:22px;top:506px">Color Scale</div>
<div class="combo" style="left:99px;top:500px;width:311px;height:22px"><span>Linear</span><i></i></div>
<div class="t" style="left:22px;top:534px">Color Map</div>
<div class="combo" style="left:99px;top:529px;width:311px;height:20px"><span style="top:3px">Default (Rainbow)</span><i style="top:7px"></i></div>
<div class="btn" style="left:417px;top:528px;width:23px;height:23px"></div>
<svg class="a" style="left:420px;top:531px" width="17" height="17" viewBox="0 0 17 17">
 <rect x="1.5" y="1.5" width="11" height="13" fill="#fff" stroke="#000"/>
 <path d="M3 4h8M3 6.5h8M3 9h8M3 11.5h6" stroke="#505050" stroke-width="1"/>
 <path d="M10 8l5 5-2 0 1 3-1 0-1-3-2 1z" fill="#fff" stroke="#000" stroke-width="0.8"/>
</svg>
<div class="t" style="left:16px;top:568px">Undef. Color</div>
<div class="a" style="left:93px;top:563px;width:323px;height:21px;background:#c0c0c0;border:1.5px solid #101010"></div>
<div class="btn" style="left:423px;top:563px;width:23px;height:22px;line-height:19px">...</div>

<!-- buttons -->
<div class="btn" style="left:11px;top:666px;width:73px;height:21px;border:2px solid #0078d7;line-height:17px">Apply</div>
<div class="btn" style="left:301px;top:666px;width:73px;height:21px">Reset</div>
<div class="btn" style="left:382px;top:666px;width:73px;height:21px">Defaults</div>


<!-- RIGHT PANEL -->
<!-- right panel frame -->
<div class="a" style="left:469px;top:80px;width:884px;height:596px;border:1px solid #dadada;background:#fff"></div>
<!-- viewer toolbar -->
<div class="a" style="left:471px;top:83px;width:880px;height:25px;background:#f0f0f0"></div>
<div class="grip" style="left:475px;top:86px;height:18px"></div>
<div class="a" style="left:505px;top:82px;width:1px;height:26px;background:#d4d4d4"></div>
<div class="grip" style="left:510px;top:86px;height:18px"></div>
<div class="a" style="left:704px;top:82px;width:1px;height:26px;background:#d4d4d4"></div>
<div class="grip" style="left:709px;top:86px;height:18px"></div>
<div class="sep" style="left:633px;top:87px;height:16px"></div>
<div class="sep" style="left:662px;top:87px;height:16px"></div>
<svg class="a" style="left:485px;top:86px" width="16" height="17" viewBox="0 0 16 17">
 <path d="M0.5 4h6M3.5 1v6M1.3 1.8l4.4 4.4M5.7 1.8l-4.4 4.4" stroke="#000" stroke-width="1.1"/>
 <path d="M6.5 3.5v11.5l3-3 2.2 4.5 2-1-2.2-4.3h4z" fill="#fff" stroke="#000" stroke-width="1"/>
</svg>
<div class="a" style="left:516px;top:84px;width:23px;height:21px;background:#cce4f7;border:1px solid #99d1ff"></div>
<svg class="a" style="left:519px;top:87px" width="17" height="16" viewBox="0 0 17 16">
 <path d="M3.5 6q2-4 6.5-4q3 0 5 2" stroke="#000" stroke-width="2" fill="none"/><path d="M1 3l2.5 4.5 4-2.5z" fill="#000"/><path d="M1 2.5v5h5" fill="#000"/>
 <path d="M13.5 10q-2 4-6.5 4q-3 0-5-2" stroke="#000" stroke-width="2" fill="none"/><path d="M16 8.5v5h-5z" fill="#000"/>
</svg>
<svg class="a" style="left:543px;top:87px" width="16" height="16" viewBox="0 0 16 16">
 <path d="M8 1.5v13M1.5 8h13" stroke="#000" stroke-width="1.4"/>
 <path d="M8 0l3 3H5zM8 16l3-3H5zM0 8l3-3v6zM16 8l-3-3v6z" fill="#000"/>
</svg>
<svg class="a" style="left:565px;top:87px" width="17" height="17" viewBox="0 0 17 17">
 <circle cx="6.5" cy="6.5" r="5.5" fill="#fff" stroke="#000" stroke-width="1.3"/><path d="M10.5 10.5l5 5" stroke="#000" stroke-width="2.4"/>
 <path d="M6.5 2.5l2.5 3h-5zM6.5 10.5l2.5-3h-5z" fill="#000"/>
</svg>
<svg class="a" style="left:588px;top:87px" width="17" height="17" viewBox="0 0 17 17">
 <circle cx="6.5" cy="6.5" r="5.5" fill="#fff" stroke="#000" stroke-width="1.3"/><path d="M10.5 10.5l5 5" stroke="#000" stroke-width="2.4"/>
 <path d="M6.5 3v7M3 6.5h7" stroke="#000" stroke-width="1.3"/>
</svg>
<svg class="a" style="left:611px;top:87px" width="17" height="17" viewBox="0 0 17 17">
 <circle cx="6.5" cy="6.5" r="5.5" fill="#fff" stroke="#000" stroke-width="1.3"/><path d="M10.5 10.5l5 5" stroke="#000" stroke-width="2.4"/>
 <path d="M4 5l2.5-1.5 2.5 1.5v3l-2.5 1.5-2.5-1.5z" fill="#3a7ae0" stroke="#102060" stroke-width="0.6"/>
</svg>
<svg class="a" style="left:640px;top:87px" width="17" height="16" viewBox="0 0 17 16">
 <path d="M4 1.5h11.5v9l-4 4h-10.5v-9z" fill="none" stroke="#108010" stroke-width="1.8" stroke-dasharray="1.6 1.4"/>
 <path d="M5.5 6.5h6v6h-6zM5.5 6.5l2-2h6v6l-2 2M11.5 6.5l2-2" fill="#fff" stroke="#000" stroke-width="1.1"/>
</svg>
<div class="a" style="left:671px;top:88px;width:13px;height:13px;border:1.5px solid #303030;background:linear-gradient(#b8c8f0,#f4f6fd)"></div>
<div class="a" style="left:690px;top:92px;width:0;height:0;border-left:5px solid transparent;border-right:5px solid transparent;border-top:5px solid #000"></div>
<svg class="a" style="left:718px;top:87px" width="16" height="16" viewBox="0 0 16 16">
 <text x="0" y="9" font-family="Liberation Sans" font-weight="700" font-size="10" fill="#000">?</text>
 <rect x="6.5" y="5.5" width="8" height="9" fill="#fff" stroke="#000" stroke-width="1.1"/><path d="M7 6.5h7" stroke="#3070d0" stroke-width="1.5"/><path d="M8.5 9.5h4M8.5 11.5h4" stroke="#000" stroke-width="0.8"/>
</svg>
<!-- view 1 bar -->
<div class="a" style="left:471px;top:108px;width:880px;height:21px;background:#c0c0c0"></div>
<div class="t" style="left:477px;top:114px;font-weight:700;letter-spacing:0">View 1</div>
<div class="a" style="left:521px;top:116px;width:0;height:0;border-left:5px solid transparent;border-right:5px solid transparent;border-top:6px solid #000"></div>
<!-- 3D view -->
<div class="a" style="left:471px;top:129px;width:880px;height:543px;background:linear-gradient(#6b8bdf,#ffffff);overflow:hidden">
<svg class="a" style="left:0;top:0" width="880" height="543" viewBox="0 0 880 543">
<path d="M211.9 390.0 L197.5 246.5 L197.2 243.3 L197.1 240.1 L196.9 236.9 L196.9 233.7 L197.0 230.4 L197.1 227.2 L197.3 224.0 L197.6 220.8 L198.0 217.6 L198.5 214.4 L199.0 211.2 L199.7 208.0 L200.4 204.8 L201.2 201.7 L202.1 198.5 L203.0 195.4 L204.1 192.3 L205.2 189.2 L206.4 186.2 L207.7 183.1 L209.0 180.2 L210.4 177.2 L211.9 174.3 L213.5 171.4 L215.1 168.5 L216.9 165.7 L218.7 162.9 L220.5 160.1 L222.4 157.4 L224.4 154.8 L226.5 152.2 L228.6 149.6 L230.8 147.1 L233.1 144.7 L235.4 142.3 L237.7 139.9 L240.2 137.6 L242.7 135.4 L245.2 133.2 L247.8 131.1 L250.4 129.0 L253.1 127.0 L255.9 125.1 L258.7 123.2 L261.5 121.4 L264.4 119.7 L267.3 118.1 L270.2 116.5 L273.2 115.0 L276.2 113.5 L279.3 112.1 L282.4 110.8 L285.5 109.6 L288.7 108.5 L291.8 107.4 L295.0 106.4 L298.2 105.5 L301.5 104.6 L304.7 103.9 L308.0 103.2 L311.3 102.6 L314.6 102.0 L317.9 101.6 L321.2 101.2 L324.5 100.9 L327.8 100.7 L331.1 100.6 L334.5 100.6 L337.8 100.6 L341.1 100.7 L344.4 100.9 L347.7 101.2 L351.0 101.6 L354.2 102.0 L357.5 102.5 L360.7 103.1 L363.9 103.8 L367.1 104.6 L370.3 105.4 L373.4 106.3 L376.5 107.3 L379.6 108.4 L382.6 109.5 L385.7 110.7 L388.6 112.0 L391.6 113.4 L394.5 114.8 L397.3 116.4 L400.2 117.9 L402.9 119.6 L405.7 121.3 L408.3 123.1 L411.0 125.0 L413.5 126.9 L416.1 128.9 L418.5 130.9 L420.9 133.0 L423.3 135.2 L425.6 137.4 L427.8 139.7 L430.0 142.1 L432.1 144.5 L434.1 146.9 L436.1 149.4 L438.0 152.0 L439.8 154.6 L441.6 157.2 L443.3 159.9 L444.9 162.7 L446.5 165.5 L448.0 168.3 L449.4 171.1 L450.7 174.0 L451.9 177.0 L453.1 179.9 L454.2 182.9 L455.2 185.9 L456.1 189.0 L457.0 192.1 L457.8 195.2 L458.5 198.3 L459.1 201.4 L459.6 204.6 L460.0 207.8 L460.4 210.9 L460.4 210.9 L474.7 353.9 L211.9 390.0" fill="none" stroke="#000" stroke-width="1" shape-rendering="crispEdges"/>
<path d="M431.0 460.6 L416.6 317.1 L416.3 313.9 L416.2 310.7 L416.0 307.5 L416.0 304.3 L416.1 301.0 L416.2 297.8 L416.4 294.6 L416.7 291.4 L417.1 288.2 L417.6 285.0 L418.1 281.8 L418.8 278.6 L419.5 275.4 L420.3 272.3 L421.2 269.1 L422.1 266.0 L423.2 262.9 L424.3 259.8 L425.5 256.8 L426.8 253.7 L428.1 250.8 L429.5 247.8 L431.0 244.9 L432.6 242.0 L434.2 239.1 L436.0 236.3 L437.8 233.5 L439.6 230.7 L441.5 228.0 L443.5 225.4 L445.6 222.8 L447.7 220.2 L449.9 217.7 L452.2 215.3 L454.5 212.9 L456.8 210.5 L459.3 208.2 L461.8 206.0 L464.3 203.8 L466.9 201.7 L469.5 199.6 L472.2 197.6 L475.0 195.7 L477.8 193.8 L480.6 192.0 L483.5 190.3 L486.4 188.7 L489.3 187.1 L492.3 185.6 L495.3 184.1 L498.4 182.7 L501.5 181.4 L504.6 180.2 L507.8 179.1 L510.9 178.0 L514.1 177.0 L517.3 176.1 L520.6 175.2 L523.8 174.5 L527.1 173.8 L530.4 173.2 L533.7 172.6 L537.0 172.2 L540.3 171.8 L543.6 171.5 L546.9 171.3 L550.2 171.2 L553.6 171.2 L556.9 171.2 L560.2 171.3 L563.5 171.5 L566.8 171.8 L570.1 172.2 L573.3 172.6 L576.6 173.1 L579.8 173.7 L583.0 174.4 L586.2 175.2 L589.4 176.0 L592.5 176.9 L595.6 177.9 L598.7 179.0 L601.7 180.1 L604.8 181.3 L607.7 182.6 L610.7 184.0 L613.6 185.4 L616.4 187.0 L619.3 188.5 L622.0 190.2 L624.8 191.9 L627.4 193.7 L630.1 195.6 L632.6 197.5 L635.2 199.5 L637.6 201.5 L640.0 203.6 L642.4 205.8 L644.7 208.0 L646.9 210.3 L649.1 212.7 L651.2 215.1 L653.2 217.5 L655.2 220.0 L657.1 222.6 L658.9 225.2 L660.7 227.8 L662.4 230.5 L664.0 233.3 L665.6 236.1 L667.1 238.9 L668.5 241.7 L669.8 244.6 L671.0 247.6 L672.2 250.5 L673.3 253.5 L674.3 256.5 L675.2 259.6 L676.1 262.7 L676.9 265.8 L677.6 268.9 L678.2 272.0 L678.7 275.2 L679.1 278.4 L679.5 281.5 L679.5 281.5 L693.8 424.5 L431.0 460.6" fill="none" stroke="#000" stroke-width="1" shape-rendering="crispEdges"/>
<path d="M211.9 390.0 L431.0 460.6 M474.7 353.9 L693.8 424.5" fill="none" stroke="#000" stroke-width="1" shape-rendering="crispEdges"/>
<!-- square on left face -->
<path d="M290.5 253.8 L370.3 242.8 L379.3 324.9 L299.1 335.3 Z" fill="none" stroke="#000" stroke-width="1.6"/>
<!-- colored inlet -->
<path d="M535.70 363.10 L576.00 358.20 L579.60 399.40 L539.60 404.90Z" fill="#000"/>
<path d="M536.69 363.91 L575.17 359.21 L578.62 398.62 L540.41 403.86Z" fill="#0018e0"/>
<path d="M537.46 364.53 L574.53 360.00 L577.86 398.01 L541.05 403.05Z" fill="#0090ff"/>
<path d="M538.35 365.25 L573.79 360.91 L576.99 397.32 L541.77 402.13Z" fill="#00e8f0"/>
<path d="M539.45 366.15 L572.88 362.04 L575.90 396.45 L542.68 400.97Z" fill="#30ff60"/>
<path d="M540.57 367.24 L549.21 365.97 L555.44 367.35 L558.37 365.97 L563.25 363.63 L571.94 362.97 L574.98 395.25 L561.20 397.42 L555.00 396.11 L551.21 398.99 L543.84 400.40 L542.20 387.02 L543.42 382.74 L541.26 374.78Z" fill="#e8ff00"/>
<path d="M542.31 368.47 L549.35 367.60 L555.62 369.38 L559.51 367.36 L563.40 365.35 L570.67 364.75 L573.57 394.11 L561.07 396.01 L554.86 394.59 L551.08 397.57 L545.11 398.78 L543.80 386.81 L545.08 382.01 L542.97 375.59Z" fill="#ffaa00"/>
<path d="M543.63 369.54 L549.47 368.81 L555.74 370.70 L559.62 368.57 L563.52 366.66 L569.77 366.08 L572.36 393.05 L560.94 394.59 L554.75 393.37 L550.95 396.14 L546.36 396.97 L545.00 386.65 L546.39 381.84 L544.27 376.45Z" fill="#ff5000"/>
<path d="M547.76 394.52 L550.35 389.55 L555.22 387.36 L561.28 387.08 L565.52 389.07 L561.74 392.13 L554.63 392.06 L550.88 395.33Z" fill="#ff2800"/>

</svg>
</div>
<!-- legend -->
<div class="t" style="left:474px;top:146px;font-size:13px;line-height:15px;letter-spacing:0;color:#101010">Velocity</div>
<div class="t" style="left:474px;top:159px;font-size:13px;line-height:15px;letter-spacing:0;color:#101010">Inlet Velocity</div>
<div class="a" style="left:474px;top:181px;width:18px;height:242px;border:1.5px solid #000;border-right-width:1px;background:linear-gradient(#ff0000 0.000%,#ff0000 3.571%,#ff2600 3.571%,#ff2600 7.143%,#ff4c00 7.143%,#ff4c00 10.714%,#ff7100 10.714%,#ff7100 14.286%,#ff9700 14.286%,#ff9700 17.857%,#ffbd00 17.857%,#ffbd00 21.429%,#ffe300 21.429%,#ffe300 25.000%,#f6ff00 25.000%,#f6ff00 28.571%,#d0ff00 28.571%,#d0ff00 32.143%,#aaff00 32.143%,#aaff00 35.714%,#84ff00 35.714%,#84ff00 39.286%,#5eff00 39.286%,#5eff00 42.857%,#39ff00 42.857%,#39ff00 46.429%,#13ff00 46.429%,#13ff00 50.000%,#00ff13 50.000%,#00ff13 53.571%,#00ff39 53.571%,#00ff39 57.143%,#00ff5e 57.143%,#00ff5e 60.714%,#00ff84 60.714%,#00ff84 64.286%,#00ffaa 64.286%,#00ffaa 67.857%,#00ffd0 67.857%,#00ffd0 71.429%,#00fff6 71.429%,#00fff6 75.000%,#00e3ff 75.000%,#00e3ff 78.571%,#00bdff 78.571%,#00bdff 82.143%,#0097ff 82.143%,#0097ff 85.714%,#0071ff 85.714%,#0071ff 89.286%,#004cff 89.286%,#004cff 92.857%,#0026ff 92.857%,#0026ff 96.429%,#0000ff 96.429%,#0000ff 100.000%)"></div>
<svg class="a" style="left:0;top:0" width="500" height="430"><path d="M491 182.5h3 M491 191.5h3 M491 199.5h3 M491 208.5h3 M491 216.5h3 M491 225.5h3 M491 233.5h3 M491 242.5h3 M491 251.5h3 M491 259.5h3 M491 268.5h3 M491 276.5h3 M491 285.5h3 M491 293.5h3 M491 302.5h3 M491 311.5h3 M491 319.5h3 M491 328.5h3 M491 336.5h3 M491 345.5h3 M491 353.5h3 M491 362.5h3 M491 371.5h3 M491 379.5h3 M491 388.5h3 M491 396.5h3 M491 405.5h3 M491 413.5h3 M491 422.5h3" stroke="#000" stroke-width="1" shape-rendering="crispEdges"/></svg>
<div class="t" style="left:499px;top:183.0px;font-size:13px;line-height:15px;letter-spacing:0.1px;color:#101010">4.091e+00</div>
<div class="t" style="left:499px;top:199.7px;font-size:13px;line-height:15px;letter-spacing:0.1px;color:#101010">3.799e+00</div>
<div class="t" style="left:499px;top:216.5px;font-size:13px;line-height:15px;letter-spacing:0.1px;color:#101010">3.507e+00</div>
<div class="t" style="left:499px;top:233.2px;font-size:13px;line-height:15px;letter-spacing:0.1px;color:#101010">3.214e+00</div>
<div class="t" style="left:499px;top:250.0px;font-size:13px;line-height:15px;letter-spacing:0.1px;color:#101010">2.922e+00</div>
<div class="t" style="left:499px;top:266.7px;font-size:13px;line-height:15px;letter-spacing:0.1px;color:#101010">2.630e+00</div>
<div class="t" style="left:499px;top:283.4px;font-size:13px;line-height:15px;letter-spacing:0.1px;color:#101010">2.338e+00</div>
<div class="t" style="left:499px;top:300.2px;font-size:13px;line-height:15px;letter-spacing:0.1px;color:#101010">2.045e+00</div>
<div class="t" style="left:499px;top:316.9px;font-size:13px;line-height:15px;letter-spacing:0.1px;color:#101010">1.753e+00</div>
<div class="t" style="left:499px;top:333.7px;font-size:13px;line-height:15px;letter-spacing:0.1px;color:#101010">1.461e+00</div>
<div class="t" style="left:499px;top:350.4px;font-size:13px;line-height:15px;letter-spacing:0.1px;color:#101010">1.169e+00</div>
<div class="t" style="left:499px;top:367.1px;font-size:13px;line-height:15px;letter-spacing:0.1px;color:#101010">8.766e-01</div>
<div class="t" style="left:499px;top:383.9px;font-size:13px;line-height:15px;letter-spacing:0.1px;color:#101010">5.844e-01</div>
<div class="t" style="left:499px;top:400.6px;font-size:13px;line-height:15px;letter-spacing:0.1px;color:#101010">2.922e-01</div>
<div class="t" style="left:499px;top:417.4px;font-size:13px;line-height:15px;letter-spacing:0.1px;color:#101010">0.000e+00</div>
<div class="t" style="left:474px;top:434px;font-size:13px;line-height:15px;letter-spacing:0.1px;color:#101010">[m s^-1]</div><!-- ANSYS logo -->
<div class="t" style="right:33px;top:138px;font-size:30px;line-height:33px;font-weight:700;color:#fff;letter-spacing:-0.5px;transform:scaleX(0.8);transform-origin:right top">ANSYS</div>
<div class="t" style="right:33px;top:167px;font-size:16.5px;line-height:19px;color:#fff;letter-spacing:0;transform:scaleX(0.96);transform-origin:right top">2020 <b>R1</b></div>
<div class="a" style="left:1244px;top:191px;width:83px;height:1px;background:#fff"></div>
<div class="t" style="left:1244px;top:197px;font-size:13.5px;line-height:14px;color:#fff;letter-spacing:4.6px;transform:scaleX(0.8);transform-origin:left top">ACADEMIC</div>
<!-- scale bar -->
<div class="a" style="left:765px;top:627px;width:292px;height:11px;border:1px solid #000;background:linear-gradient(90deg,#000 0,#000 73px,#fff 73px,#fff 145px,#000 145px,#000 218px,#fff 218px)"></div>
<div class="t" style="left:761px;top:610px;font-size:13px;line-height:15px;letter-spacing:0;color:#101010">0</div>
<div class="t" style="left:894px;top:610px;font-size:13px;line-height:15px;letter-spacing:0;color:#101010">0.350</div>
<div class="t" style="left:1026px;top:610px;font-size:13px;line-height:15px;letter-spacing:0;color:#101010">0.700</div>
<div class="t" style="left:1066px;top:610px;font-size:13px;line-height:15px;letter-spacing:0;color:#101010">(m)</div>
<div class="t" style="left:822px;top:640px;font-size:13px;line-height:15px;letter-spacing:0;color:#101010">0.175</div>
<div class="t" style="left:967px;top:640px;font-size:13px;line-height:15px;letter-spacing:0;color:#101010">0.525</div>
<!-- triad -->
<svg class="a" style="left:1236px;top:608px" width="64" height="66" viewBox="0 0 64 66">
 <path d="M50 13.5L20 18" stroke="#e00000" stroke-width="2.2"/><path d="M14 19l8-4.5 1 8z" fill="#a00000"/>
 <path d="M50 13.5L54 44" stroke="#0000e0" stroke-width="2.2"/><path d="M50 42l4.5 9 3.5-9.5z" fill="#0000c0"/>
 <path d="M37 7l4 0 9 6-10 -1z" fill="#10a010"/><path d="M38 6l2-2 1 3z" fill="#10a010"/>
 <circle cx="28.5" cy="33.5" r="3.5" fill="#00d8e8"/>
 <text x="5" y="24" font-family="Liberation Sans" font-weight="700" font-size="10" fill="#e00000">X</text>
 <text x="52" y="62" font-family="Liberation Sans" font-weight="700" font-size="10" fill="#0000e0">Z</text>
</svg>
<!-- bottom tabs -->
<div class="tab" style="left:542px;top:675px;width:85px;height:19px;border-color:#d0d0d0;border-bottom:1px solid #d0d0d0"><span style="left:10px;top:3px">Table Viewer</span></div>
<div class="tab" style="left:626px;top:675px;width:87px;height:19px;border-color:#d0d0d0;border-bottom:1px solid #d0d0d0"><span style="left:11px;top:3px">Chart Viewer</span></div>
<div class="tab" style="left:712px;top:675px;width:105px;height:19px;border-color:#d0d0d0;border-bottom:1px solid #d0d0d0"><span style="left:11px;top:3px">Comment Viewer</span></div>
<div class="tab" style="left:816px;top:675px;width:91px;height:19px;border-color:#d0d0d0;border-bottom:1px solid #d0d0d0"><span style="left:10px;top:3px">Report Viewer</span></div>
<div class="a" style="left:470px;top:674px;width:73px;height:22px;background:#fff;border:1px solid #d0d0d0;border-top:none"></div>
<div class="t" style="left:481px;top:680px">3D Viewer</div>
<!-- resize grip -->
<svg class="a" style="left:1344px;top:714px" width="12" height="12"><path d="M9 1h2v2H9zM6 4h2v2H6zM9 4h2v2H9zM3 7h2v2H3zM6 7h2v2H6zM9 7h2v2H9z" fill="#a8a8a8"/></svg>


</body></html>
